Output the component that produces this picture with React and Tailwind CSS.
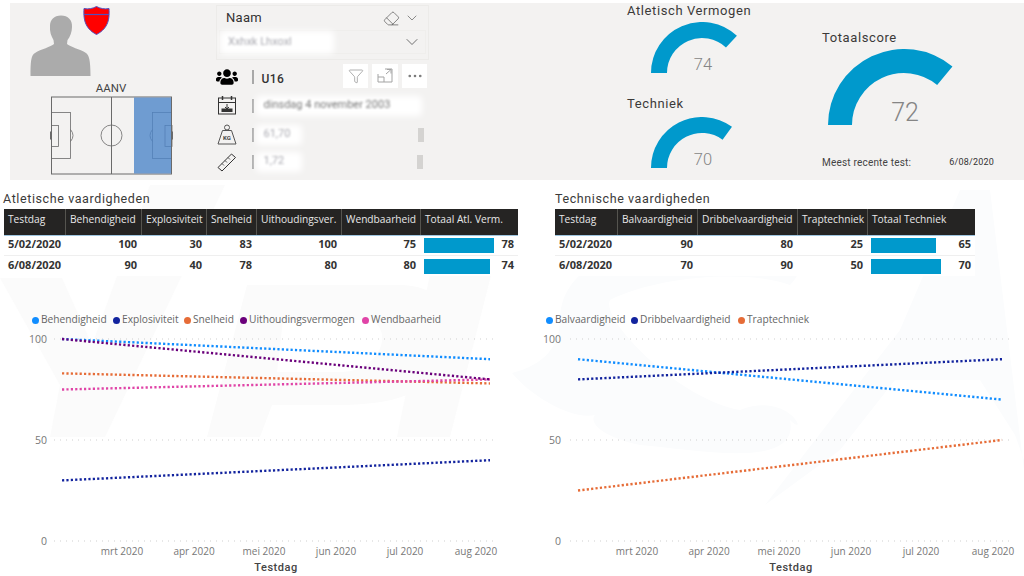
import React from "react";
import { FaUsers } from "react-icons/fa";
import { ChevronDown, Eraser, Funnel, Ellipsis } from "lucide-react";

function arc(cx, cy, R, r, deg) {
  const a = (deg * Math.PI) / 180;
  const p = (rad) => [cx - rad * Math.cos(a), cy - rad * Math.sin(a)];
  const [x1, y1] = p(R);
  const [x2, y2] = p(r);
  return `M${cx - R} ${cy} A${R} ${R} 0 0 1 ${x1} ${y1} L${x2} ${y2} A${r} ${r} 0 0 0 ${cx - r} ${cy} Z`;
}

function Gauge({ R, r, value, size }) {
  return (
    <div className="relative" style={{ width: R * 2, height: R }}>
      <svg width={R * 2} height={R} className="block">
        <path d={arc(R, R, R, r, value * 1.8)} fill="#0099cc" />
      </svg>
      <div
        className={`absolute left-0 right-0 text-center text-[#858585] font-[Roboto,sans-serif] font-light leading-none ${size}`}
      >
        {value}
      </div>
    </div>
  );
}

function Pitch() {
  const c = "#6a6a6a";
  return (
    <svg width="124" height="80" viewBox="50 96.5 124 80" className="block">
      <rect x="51.5" y="97.5" width="120" height="77" fill="none" stroke={c} />
      <line x1="111.5" y1="97.5" x2="111.5" y2="174.5" stroke={c} />
      <circle cx="111.5" cy="136" r="10.5" fill="none" stroke={c} strokeWidth="0.8" />
      <rect x="51.5" y="113" width="19" height="46" fill="none" stroke={c} strokeWidth="0.8" />
      <rect x="51.5" y="126" width="7" height="21" fill="none" stroke={c} strokeWidth="0.8" />
      <path d="M70.5 130 Q75.5 136 70.5 142" fill="none" stroke={c} strokeWidth="0.8" />
      <rect x="50" y="132" width="1.5" height="8" fill={c} />
      <rect x="152.5" y="113" width="19" height="46" fill="none" stroke={c} strokeWidth="0.8" />
      <rect x="165" y="126" width="7" height="21" fill="none" stroke={c} strokeWidth="0.8" />
      <path d="M152.5 130 Q147.5 136 152.5 142" fill="none" stroke={c} strokeWidth="0.8" />
      <rect x="171.5" y="132" width="1.5" height="8" fill={c} />
      <rect x="134" y="98" width="37" height="76" fill="#4d86c9" opacity="0.8" />
    </svg>
  );
}

function Blurred({ text, w, h = 20, strong }) {
  return (
    <div className="relative" style={{ width: w, height: h }}>
      <div className="absolute inset-0 bg-white blur-[3px] rounded-sm" />
      <div
        className={`absolute inset-0 px-2 flex items-center whitespace-nowrap text-[11px] blur-[0.8px] font-[Roboto,sans-serif] ${strong ? "text-[#777]" : "text-[#a9a9b0]"}`}
      >
        {text}
      </div>
    </div>
  );
}

function Sep() {
  return <div className="w-[1.5px] h-[14px] bg-[#a8a8a8] ml-[14px] mr-[8px] shrink-0" />;
}

function Calendar() {
  return (
    <svg width="20" height="21" viewBox="0 0 20 21" fill="none" stroke="#333" strokeWidth="1">
      <rect x="1.5" y="3" width="17" height="16" />
      <line x1="1.5" y1="7.5" x2="18.5" y2="7.5" />
      <line x1="5.5" y1="1" x2="5.5" y2="5" strokeWidth="1.5" />
      <line x1="14.5" y1="1" x2="14.5" y2="5" strokeWidth="1.5" />
      <rect x="5" y="14" width="10" height="2.5" fill="#333" />
      <path d="M10 9v5M8 12l2 2 2-2" />
    </svg>
  );
}

function Kg() {
  return (
    <svg width="20" height="21" viewBox="0 0 20 21" fill="none" stroke="#555" strokeWidth="1">
      <circle cx="10" cy="3.5" r="2.5" />
      <path d="M5.5 6.5h9l4.5 13.5h-18z" />
      <text x="10" y="16" textAnchor="middle" fontSize="6" fontWeight="700" fill="#444" stroke="none" fontFamily="Roboto, sans-serif">KG</text>
    </svg>
  );
}

function RulerIcon() {
  return (
    <svg width="20" height="20" viewBox="0 0 20 20" fill="none" stroke="#333" strokeWidth="1">
      <path d="M1 15.5L14.5 2l4 3.5L5 19z" />
      <path d="M5 11.5l2 2M8 8.5l2 2M11 5.5l2 2" strokeWidth="0.8" />
    </svg>
  );
}

function Focus() {
  return (
    <svg width="16" height="15" viewBox="0 0 16 15" fill="none" stroke="#a3a3a3" strokeWidth="1">
      <path d="M1 6V14H15V1H8" />
      <path d="M1 9h6v5" />
      <path d="M9 6l4.5-4M10 1.5h4v4" />
    </svg>
  );
}

function Profile() {
  return (
    <div className="w-[206px] shrink-0 flex flex-col">
      <svg width="206" height="76" viewBox="10 3 206 76" className="block shrink-0">
        <path
          d="M61 15.5C68 15.5 72.5 20 72 27C72 32 70 37 67.5 40L67 44C70 47 80 49 86 53C89 55 90.5 60 90.5 76L30.5 76C30.5 62 31 55 35 53C41 49 51 47 54 44L53.5 40C51 36 49.5 31 50 26C50 20 54 15.5 61 15.5Z"
          fill="#ababab"
        />
        <path
          d="M96.5 6.5C93 8.5 88 9.5 84 8.5C83.5 18 84 28 96.5 34.5C109 28 109.5 18 109 8.5C105 9.5 100 8.5 96.5 6.5Z"
          fill="#ff0000"
          stroke="#5050c0"
        />
        <line x1="84" y1="14.5" x2="109" y2="14.5" stroke="#5050c0" strokeWidth="1.2" />
      </svg>
      <div className="text-center text-[11.5px] leading-[18px] text-[#444] font-[Roboto,sans-serif] pr-[4px]">AANV</div>
      <div className="pl-[40px] -mt-[1px]">
        <Pitch />
      </div>
    </div>
  );
}

function InfoRow({ icon, children, right, h }) {
  return (
    <div className="flex items-center" style={{ height: h }}>
      <div className="w-[22px] flex justify-center shrink-0">{icon}</div>
      <Sep />
      <div className="flex-1 min-w-0">{children}</div>
      {right}
    </div>
  );
}

function Middle() {
  return (
    <div className="w-[216px] shrink-0 flex flex-col">
      <div className="mt-[2px] h-[55px] w-[213px] border border-[#ecebe9] px-[2px] flex flex-col">
        <div className="h-[24px] flex items-center pl-[7px] pr-[6px] justify-between">
          <span className="text-[13px] text-[#333] font-[Roboto,sans-serif] tracking-[0.3px]">Naam</span>
          <div className="flex items-center gap-[4px] text-[#555]">
            <Eraser size={17} strokeWidth={1} />
            <ChevronDown size={16} strokeWidth={1} />
          </div>
        </div>
        <div className="h-[24px] flex items-center justify-between pr-[3px] border border-[#efeeec]">
          <Blurred text="Xxhxk  Lhxoxl" w={114} h={23} />
          <ChevronDown size={20} strokeWidth={1} className="text-[#555]" />
        </div>
      </div>
      <div className="mt-[3px] flex flex-col">
        <InfoRow
          h={28}
          icon={<FaUsers size={22} className="text-black" />}
          right={
            <div className="flex gap-[4px] mr-[5px]">
              <div className="w-[25px] h-[24px] bg-white flex items-center justify-center mb-[3px]">
                <Funnel size={16} strokeWidth={1} className="text-[#888]" />
              </div>
              <div className="w-[26px] h-[24px] bg-white flex items-center justify-center mb-[3px]">
                <Focus />
              </div>
              <div className="w-[25px] h-[24px] bg-white flex items-center justify-center mb-[3px]">
                <Ellipsis size={18} strokeWidth={1.5} className="text-[#777]" />
              </div>
            </div>
          }
        >
          <span className="text-[12px] font-medium text-[#333] font-[Roboto,sans-serif] tracking-[0.4px]">U16</span>
        </InfoRow>
        <InfoRow h={29} icon={<Calendar />}>
          <div className="-ml-[6px]">
            <Blurred text="dinsdag 4 november 2003" w={166} strong />
          </div>
        </InfoRow>
        <InfoRow
          h={29}
          icon={<Kg />}
          right={<div className="w-[6px] h-[14px] bg-[#d4d3d1] mr-[8px]" />}
        >
          <div className="-ml-[6px]">
            <Blurred text="61,70" w={46} />
          </div>
        </InfoRow>
        <InfoRow
          h={25}
          icon={<RulerIcon />}
          right={<div className="w-[6px] h-[14px] bg-[#d4d3d1] mr-[9px]" />}
        >
          <div className="-ml-[6px]">
            <Blurred text="1,72" w={46} />
          </div>
        </InfoRow>
      </div>
    </div>
  );
}

const titleCls = "font-[Roboto,sans-serif] text-[13px] leading-[16px] text-[#3b3a39] tracking-[0.6px]";

function Gauges() {
  return (
    <div className="flex-1 flex pl-[195px]">
      <div className="w-[195px] shrink-0 flex flex-col">
        <div className={`${titleCls} mt-[0px]`}>Atletisch Vermogen</div>
        <div className="ml-[24px] mt-[3px]">
          <Gauge R={51} r={35} value={74} size="text-[16.5px] bottom-[0px] pl-[2px]" />
        </div>
        <div className={`${titleCls} mt-[23px]`}>Techniek</div>
        <div className="ml-[24px] mt-[5px]">
          <Gauge R={51} r={35} value={70} size="text-[16.5px] bottom-[0px] pl-[2px]" />
        </div>
      </div>
      <div className="flex-1 flex flex-col">
        <div className={`${titleCls} mt-[27px]`}>Totaalscore</div>
        <div className="ml-[6px] mt-[3px]">
          <Gauge R={76} r={52} value={72} size="text-[25px] bottom-[0px] pl-[2px]" />
        </div>
        <div className="flex mt-[30px] items-center pr-[30px] justify-between">
          <span className="font-[Roboto,sans-serif] text-[10px] text-[#444] tracking-[0.2px]">Meest recente test:</span>
          <span className="font-[Roboto,sans-serif] text-[9px] text-[#333] tracking-[0.2px]">6/08/2020</span>
        </div>
      </div>
    </div>
  );
}

function Table({ title, titleCl, widths, headers, rows, barMax, className }) {
  return (
    <div className={className}>
      <div className={`font-[Roboto,sans-serif] text-[12.5px] text-[#3b3a39] h-[19px] leading-[18px] tracking-[0.6px] ${titleCl}`}>{title}</div>
      <div className="w-full font-['Open_Sans',sans-serif]">
        <div className="flex h-[27px] bg-[#252423] border-b border-[#9fc6e0]">
          {headers.map((h, i) => (
            <div
              key={h}
              className={`shrink-0 text-[10.2px] leading-[16px] pt-[2px] pl-[4px] text-[#e8e8e8] whitespace-nowrap overflow-hidden ${i > 0 ? "border-l border-[#55544f]" : ""}`}
              style={{ width: widths[i] }}
            >
              {h}
            </div>
          ))}
        </div>
        {rows.map((r, ri) => (
          <div key={r[0]} className={`flex h-[20px] bg-white items-center ${ri === 0 ? "border-b border-[#efefef]" : ""}`}>
            {r.map((c, i) => {
              if (i === 0)
                return (
                  <div key={i} className="shrink-0 pl-[4px] pb-[2px] text-[11px] font-bold text-[#333]" style={{ width: widths[0] }}>
                    {c}
                  </div>
                );
              if (i === r.length - 1)
                return (
                  <div key={i} className="shrink-0 flex items-center pl-[4px] pr-[4px]" style={{ width: widths[i] }}>
                    <div className="h-[15px] bg-[#0099cc]" style={{ width: c * barMax }} />
                    <div className="flex-1 text-right pb-[2px] text-[11px] font-bold text-[#333]">{c}</div>
                  </div>
                );
              return (
                <div key={i} className="shrink-0 pr-[4px] pb-[2px] text-right text-[11px] font-bold text-[#333]" style={{ width: widths[i] }}>
                  {c}
                </div>
              );
            })}
          </div>
        ))}
      </div>
    </div>
  );
}

function Legend({ items, className, gaps }) {
  return (
    <div className={`flex items-center h-[14px] font-['Open_Sans',sans-serif] text-[10.2px] text-[#666] ${className}`}>
      {items.map(([n, c], i) => (
        <div key={n} className="flex items-center shrink-0" style={{ width: gaps[i] }}>
          <span className="w-[7px] h-[7px] rounded-full mr-[2px] shrink-0" style={{ background: c }} />
          <span className="whitespace-nowrap">{n}</span>
        </div>
      ))}
    </div>
  );
}

const Y = (v) => 541 - v * 2.02;

function Chart({ x0, x1, gridL, gridR, labelX, labelXs, testX, lines, w, off }) {
  return (
    <svg width={w} height="246" viewBox={`${off} 330 ${w} 246`} className="block">
      {[100, 50, 0].map((v) => (
        <g key={v}>
          <line x1={gridL} x2={gridR} y1={Y(v)} y2={Y(v)} stroke="#cfcfcf" strokeWidth="1" strokeDasharray="1 5" />
          <text x={labelX} y={Y(v) + 4} textAnchor="end" fontSize="10.5" fill="#777" fontFamily="Open Sans, sans-serif">
            {v}
          </text>
        </g>
      ))}
      {["mrt 2020", "apr 2020", "mei 2020", "jun 2020", "jul 2020", "aug 2020"].map((m, i) => (
        <text key={m} x={labelXs[i]} y="555" textAnchor="middle" fontSize="10" fill="#777" fontFamily="Open Sans, sans-serif">
          {m}
        </text>
      ))}
      <text x={testX} y="571" textAnchor="middle" fontSize="11" fontWeight="500" letterSpacing="0.5" fill="#444" fontFamily="Roboto, sans-serif">
        Testdag
      </text>
      {lines.map(([a, b, c], i) => (
        <line key={i} x1={x0} x2={x1} y1={Y(a)} y2={Y(b)} stroke={c} strokeWidth="2.4" strokeDasharray="2.2 2.2" />
      ))}
    </svg>
  );
}

const BLUE = "#118dff";
const NAVY = "#12239e";
const ORANGE = "#e66c37";
const PURPLE = "#6b007b";
const PINK = "#e044a7";

function Watermark() {
  return (
    <svg className="absolute left-0 top-0" width="1024" height="576" viewBox="0 0 1024 576">
      <g fill="#fbfbfb">
        <path d="M0 278H62L92 345L150 185H225L105 437H50L60 385Z" />
        <path d="M207 437L247 285H400C445 285 460 320 445 355C430 395 395 405 335 405H272L260 437ZM283 320L277 372H340C380 372 395 330 370 320Z" fillRule="evenodd" />
        <path d="M397 437L437 240H500L450 437Z" />
      </g>
      <g fill="#fbfcfd">
        <path d="M512 373C545 365 560 345 560 320C560 260 640 230 760 240C800 245 810 265 790 285C750 270 660 275 610 300C600 320 680 400 740 410C790 390 810 440 790 420C800 470 700 450 640 445C595 435 590 420 595 415C570 420 530 395 512 373Z" />
        <path d="M765 505L900 330L960 190H990L1024 470V460L1015 435L980 380H895L840 450Z" />
      </g>
    </svg>
  );
}

export default function App() {
  return (
    <div className="relative w-[1024px] h-[576px] bg-white overflow-hidden">
      <Watermark />
      <div className="relative flex flex-col h-full">
        <div className="mt-[3px] ml-[10px] h-[177px] bg-[#f3f2f1] flex shrink-0">
          <Profile />
          <Middle />
          <Gauges />
        </div>
        <div className="flex pt-[10px] h-[96px] shrink-0">
          <Table
            className="w-[514px] ml-[4px]"
            titleCl="-ml-[1px]"
            title="Atletische vaardigheden"
            widths={[61, 76, 65, 50, 85, 79, 98]}
            headers={["Testdag", "Behendigheid", "Explosiviteit", "Snelheid", "Uithoudingsver.", "Wendbaarheid", "Totaal Atl. Verm."]}
            rows={[
              ["5/02/2020", 100, 30, 83, 100, 75, 78],
              ["6/08/2020", 90, 40, 78, 80, 80, 74],
            ]}
            barMax={0.895}
          />
          <Table
            className="w-[420px] ml-[37px]"
            titleCl=""
            title="Technische vaardigheden"
            widths={[62, 80, 100, 70, 108]}
            headers={["Testdag", "Balvaardigheid", "Dribbelvaardigheid", "Traptechniek", "Totaal Techniek"]}
            rows={[
              ["5/02/2020", 90, 80, 25, 65],
              ["6/08/2020", 70, 90, 50, 70],
            ]}
            barMax={1}
          />
        </div>
        <div className="flex h-[54px] pt-[37px] shrink-0">
          <Legend
            className="ml-[32px] w-[514px]"
            gaps={[81, 71, 56, 122, 90]}
            items={[["Behendigheid", BLUE], ["Explosiviteit", NAVY], ["Snelheid", ORANGE], ["Uithoudingsvermogen", PURPLE], ["Wendbaarheid", PINK]]}
          />
          <Legend
            gaps={[85, 107, 80]}
            items={[["Balvaardigheid", BLUE], ["Dribbelvaardigheid", NAVY], ["Traptechniek", ORANGE]]}
          />
        </div>
        <div className="flex">
          <Chart
            off={0}
            w={512}
            x0={62}
            x1={490}
            gridL={54}
            gridR={496}
            labelX={47}
            labelXs={[122, 194, 264, 336, 405, 476]}
            testX={276}
            lines={[[100, 90, BLUE], [83, 78, ORANGE], [75, 80, PINK], [100, 80, PURPLE], [30, 40, NAVY]]}
          />
          <Chart
            off={512}
            w={512}
            x0={578}
            x1={1002}
            gridL={570}
            gridR={1012}
            labelX={561}
            labelXs={[637, 709, 779, 851, 921, 993]}
            testX={791}
            lines={[[90, 70, BLUE], [80, 90, NAVY], [25, 50, ORANGE]]}
          />
        </div>
      </div>
    </div>
  );
}
